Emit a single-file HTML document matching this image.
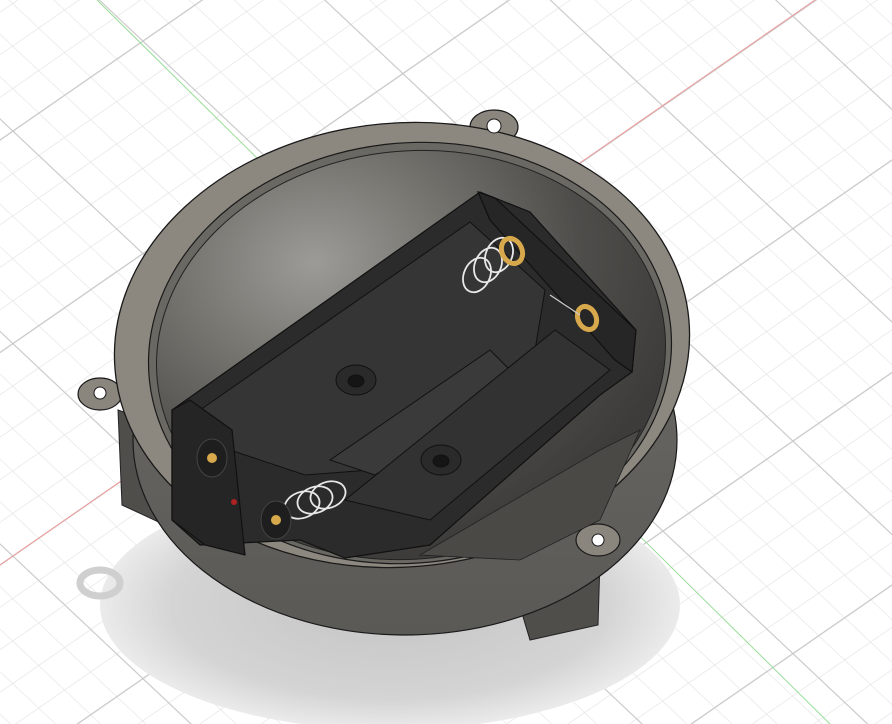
<!DOCTYPE html>
<html><head><style>html,body{margin:0;padding:0;background:#fff;overflow:hidden}svg{display:block}</style></head>
<body>
<svg width="892" height="724" viewBox="0 0 892 724" xmlns="http://www.w3.org/2000/svg">
<defs>
<pattern id="g" width="1" height="1" patternUnits="userSpaceOnUse" patternTransform="matrix(26 -18 26 24.5 402 286)">
<path d="M0 0H1M0 0V1" stroke="#e6e6e6" stroke-width="0.045" fill="none"/>
</pattern>
<pattern id="G" width="5" height="5" patternUnits="userSpaceOnUse" patternTransform="matrix(26 -18 26 24.5 402 286)">
<path d="M0 0H5M0 0V5" stroke="#c8c8c8" stroke-width="0.07" fill="none"/>
</pattern>
<radialGradient id="sh" cx="0.5" cy="0.5" r="0.5">
<stop offset="0" stop-color="#c4c4c4"/><stop offset="0.75" stop-color="#d4d4d4"/><stop offset="1" stop-color="#ebebeb"/>
</radialGradient>
<radialGradient id="in" cx="0.33" cy="0.25" r="0.75">
<stop offset="0" stop-color="#9c9b97"/><stop offset="0.35" stop-color="#75746f"/><stop offset="0.7" stop-color="#4e4d4a"/><stop offset="1" stop-color="#3d3c3a"/>
</radialGradient>
<linearGradient id="bowl" x1="0" y1="0" x2="0" y2="1">
<stop offset="0" stop-color="#6d6b67"/><stop offset="1" stop-color="#5a5955"/>
</linearGradient>
</defs>
<rect width="892" height="724" fill="#fff"/>
<rect width="892" height="724" fill="url(#g)"/>
<rect width="892" height="724" fill="url(#G)"/>
<ellipse cx="390" cy="605" rx="290" ry="125" fill="url(#sh)"/>
<ellipse cx="100" cy="583" rx="20" ry="13" fill="none" stroke="#cfcfcf" stroke-width="7"/>
<line x1="0" y1="565" x2="815" y2="0" stroke="#e99" stroke-width="1"/>
<line x1="97" y1="0" x2="830" y2="724" stroke="#9d9" stroke-width="1"/>
<path d="M118 410 L160 425 L165 525 L122 505 Z" fill="#4f4e4b" stroke="#222" stroke-width="1"/>
<path d="M515 590 L600 560 L598 625 L530 640 Z" fill="#4f4e4b" stroke="#222" stroke-width="1"/>
<ellipse cx="405" cy="440" rx="272" ry="195" fill="url(#bowl)" stroke="#1a1a1a" stroke-width="1.2"/>
<g fill="#8a857d" stroke="#1a1a1a" stroke-width="1.2">
<ellipse cx="494" cy="127" rx="24" ry="17"/>
<ellipse cx="100" cy="394" rx="22" ry="16"/>
<ellipse cx="598" cy="540" rx="22" ry="16"/>
</g>
<ellipse cx="402" cy="345" rx="288" ry="222" transform="rotate(-5 402 345)" fill="#8c877f" stroke="#1a1a1a" stroke-width="1.3"/>
<g fill="#fff" stroke="#1a1a1a" stroke-width="1">
<circle cx="494" cy="126" r="7"/><circle cx="100" cy="393" r="6"/><circle cx="598" cy="540" r="6"/>
</g>
<ellipse cx="410" cy="353" rx="262" ry="210" transform="rotate(-6 410 353)" fill="#6a6863" stroke="#1a1a1a" stroke-width="1.2"/>
<ellipse cx="411" cy="355" rx="255" ry="204" transform="rotate(-6 411 355)" fill="url(#in)" stroke="#222" stroke-width="1"/>
<path d="M420 555 L600 450 L640 430 L600 520 L520 560 Z" fill="#4a4946" stroke="#222" stroke-width="0.8"/>
<path d="M172 410 L480 192 L530 212 L636 330 L632 372 L600 395 L430 545 L345 558 L300 540 L200 545 L172 520 Z" fill="#2b2b2b" stroke="#111" stroke-width="1.2"/>
<path d="M200 410 L470 222 L545 290 L535 350 L370 470 L305 475 L230 450 Z" fill="#353535" stroke="#111" stroke-width="1"/>
<path d="M330 460 L490 350 L520 380 L375 475 Z" fill="#3a3a3a" stroke="#111" stroke-width="1"/>
<path d="M345 500 L555 330 L610 370 L430 520 Z" fill="#323232" stroke="#111" stroke-width="1"/>
<path d="M172 410 L190 400 L232 430 L245 555 L205 545 L172 520 Z" fill="#252525" stroke="#111" stroke-width="1.2"/>
<path d="M478 192 L495 198 L636 330 L632 372 L615 360 L490 220 Z" fill="#262626" stroke="#111" stroke-width="1.2"/>
<g fill="#2a2a2a" stroke="#111">
<ellipse cx="356" cy="380" rx="20" ry="15"/><ellipse cx="356" cy="381" rx="8" ry="6" fill="#151515"/>
<ellipse cx="441" cy="460" rx="20" ry="15"/><ellipse cx="441" cy="461" rx="8" ry="6" fill="#151515"/>
</g>
<g fill="none" stroke="#e8e8e8" stroke-width="1.8">
<ellipse cx="477" cy="275" rx="13" ry="18" transform="rotate(25 477 275)"/>
<ellipse cx="488" cy="265" rx="13" ry="18" transform="rotate(25 488 265)"/>
<ellipse cx="499" cy="255" rx="13" ry="18" transform="rotate(25 499 255)"/>
<ellipse cx="302" cy="505" rx="18" ry="13" transform="rotate(-20 302 505)"/>
<ellipse cx="315" cy="500" rx="18" ry="13" transform="rotate(-20 315 500)"/>
<ellipse cx="328" cy="495" rx="18" ry="13" transform="rotate(-20 328 495)"/>
</g>
<g fill="none" stroke="#d8a84c" stroke-width="5">
<ellipse cx="512" cy="251" rx="10" ry="13" transform="rotate(-25 512 251)"/>
<ellipse cx="587" cy="318" rx="9" ry="12" transform="rotate(-25 587 318)"/>
</g>
<line x1="550" y1="295" x2="580" y2="315" stroke="#ccc" stroke-width="1.2"/>
<g fill="#1e1e1e" stroke="#444">
<ellipse cx="212" cy="458" rx="15" ry="19"/><ellipse cx="276" cy="520" rx="15" ry="19"/>
</g>
<g fill="#d8a84c"><circle cx="212" cy="458" r="5"/><circle cx="276" cy="520" r="5"/></g>
<circle cx="234" cy="502" r="3" fill="#a22"/>
</svg>
</body></html>
